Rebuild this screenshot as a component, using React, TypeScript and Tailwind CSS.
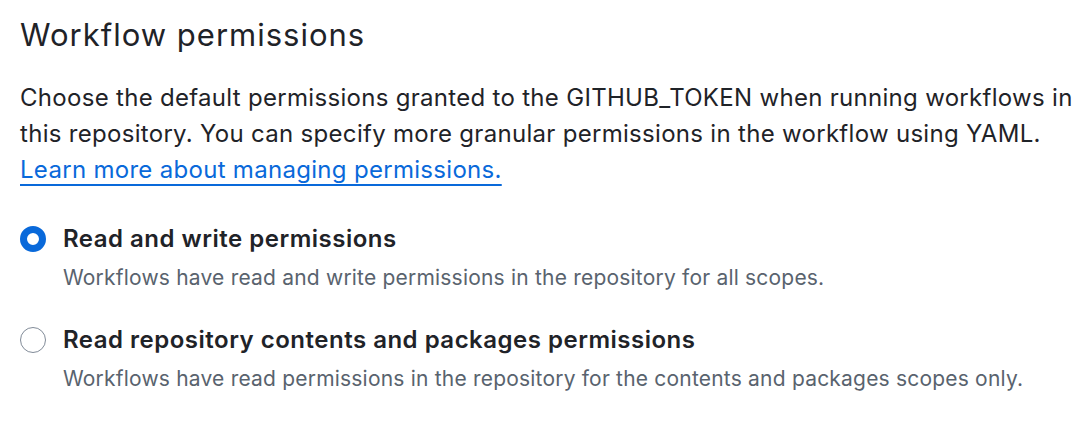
import { useState } from "react";

const options = [
    {
        id: "write",
        label: "Read and write permissions",
        note: "Workflows have read and write permissions in the repository for all scopes.",
    },
    {
        id: "read",
        label: "Read repository contents and packages permissions",
        note: "Workflows have read permissions in the repository for the contents and packages scopes only.",
    },
];

const App = () => {
    const [selected, setSelected] = useState("write");

    return (
        <div className="min-h-screen bg-white px-5 pt-[16px] text-[#1f2328] font-['Inter',sans-serif]">
            <h2 className="text-[31px] leading-[38px] tracking-[1px] font-normal">Workflow permissions</h2>
            <p className="mt-[26px] w-[1064px] text-[24px] leading-[36px] tracking-[0.3px]">
                Choose the default permissions granted to the GITHUB_TOKEN when running workflows in this
                repository. You can specify more granular permissions in the workflow using YAML.{" "}
                <a href="#" className="text-[#0969da] underline underline-offset-[6px] decoration-2">
                    Learn more about managing permissions.
                </a>
            </p>
            <div className="mt-[32px] flex flex-col gap-[23px]">
                {options.map((option) => {
                    const checked = selected === option.id;
                    return (
                        <label key={option.id} className="flex gap-[17px] cursor-pointer">
                            <span
                                onClick={() => setSelected(option.id)}
                                className={
                                    checked
                                        ? "mt-[6px] w-[26px] h-[26px] shrink-0 rounded-full border-[7px] border-[#0969da] bg-white"
                                        : "mt-[6px] w-[26px] h-[26px] shrink-0 rounded-full border border-[#818b98] bg-white"
                                }
                            />
                            <span className="flex flex-col">
                                <span className="text-[24px] leading-[38px] tracking-[0.5px] font-semibold">
                                    {option.label}
                                </span>
                                <span className="text-[21px] leading-[40px] tracking-[0.2px] text-[#59636e]">
                                    {option.note}
                                </span>
                            </span>
                        </label>
                    );
                })}
            </div>
        </div>
    );
};

export default App;
